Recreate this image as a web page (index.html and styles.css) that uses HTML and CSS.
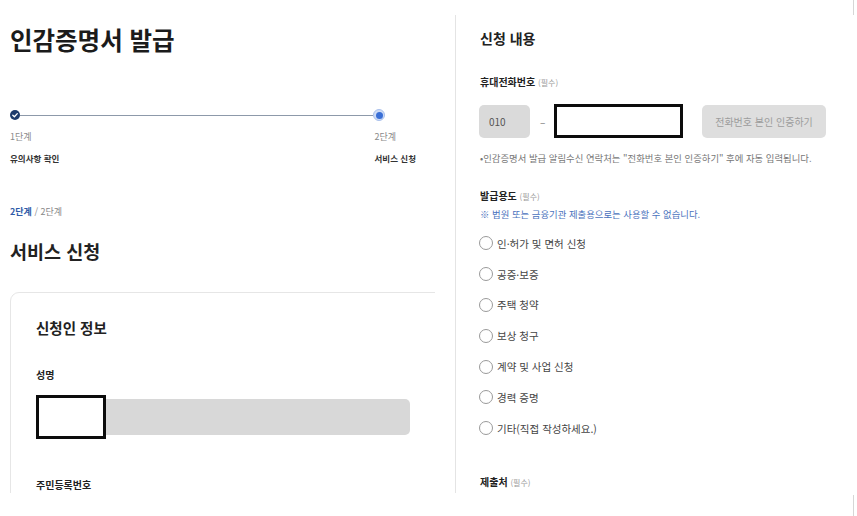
FILE: index.html
```html
<!DOCTYPE html>
<html lang="ko">
<head>
<meta charset="utf-8">
<title>인감증명서 발급</title>
<link rel="stylesheet" href="styles.css">
</head>
<body>
<div class="page">
  <section class="left">
    <h1 class="title">인감증명서 발급</h1>

    <div class="stepper">
      <div class="track">
        <span class="dot dot-done">
          <svg width="10" height="10" viewBox="0 0 10 10"><path d="M2.8 5.2 L4.4 6.7 L7.3 3.6" fill="none" stroke="#fff" stroke-width="1.3" stroke-linecap="round" stroke-linejoin="round"/></svg>
        </span>
        <span class="track-line"></span>
        <span class="dot dot-current"><span class="dot-inner"></span></span>
      </div>
      <div class="step-labels">
        <div class="step-label">
          <div class="step-num">1단계</div>
          <div class="step-name">유의사항 확인</div>
        </div>
        <div class="step-label">
          <div class="step-num">2단계</div>
          <div class="step-name">서비스 신청</div>
        </div>
      </div>
    </div>

    <div class="progress"><strong>2단계</strong> / 2단계</div>
    <h2 class="subtitle">서비스 신청</h2>

    <div class="card">
      <h3 class="card-title">신청인 정보</h3>
      <div class="field-label name-label">성명</div>
      <div class="name-field">
        <div class="gray-input"></div>
        <div class="redact redact-name"></div>
      </div>
      <div class="field-label rrn-label">주민등록번호</div>
    </div>
  </section>

  <section class="right">
    <h3 class="section-title">신청 내용</h3>

    <div class="field-label phone-label">휴대전화번호 <span class="req">(필수)</span></div>
    <div class="phone-row">
      <div class="prefix">010</div>
      <span class="dash">–</span>
      <div class="redact redact-phone"></div>
      <div class="verify-btn">전화번호 본인 인증하기</div>
    </div>
    <p class="note">•인감증명서 발급 알림수신 연락처는 "전화번호 본인 인증하기" 후에 자동 입력됩니다.</p>

    <div class="field-label purpose-label">발급용도 <span class="req">(필수)</span></div>
    <p class="warn">※ 법원 또는 금융기관 제출용으로는 사용할 수 없습니다.</p>

    <ul class="radios">
      <li class="radio"><span class="circle"></span>인·허가 및 면허 신청</li>
      <li class="radio"><span class="circle"></span>공증·보증</li>
      <li class="radio"><span class="circle"></span>주택 청약</li>
      <li class="radio"><span class="circle"></span>보상 청구</li>
      <li class="radio"><span class="circle"></span>계약 및 사업 신청</li>
      <li class="radio"><span class="circle"></span>경력 증명</li>
      <li class="radio"><span class="circle"></span>기타(직접 작성하세요.)</li>
    </ul>

    <div class="field-label submit-label">제출처 <span class="req">(필수)</span></div>
  </section>

  <div class="edge">
    <span class="edge-seg edge-top"></span>
    <span class="edge-seg edge-bottom"></span>
  </div>
</div>
</body>
</html>
```

FILE: styles.css
```css
* { box-sizing: border-box; }
html, body { margin: 0; padding: 0; background: #fff; }
body {
  width: 857px;
  height: 516px;
  overflow: hidden;
  font-family: "Noto Sans CJK KR", "Noto Sans", sans-serif;
  color: #222;
}
h1, h2, h3, p, ul { margin: 0; padding: 0; }

.page {
  display: flex;
  height: 516px;
}

/* ---------- left ---------- */
.left {
  width: 435px;
  height: 493px;
  padding-left: 10px;
  overflow: hidden;
  flex-shrink: 0;
}
.title {
  margin-top: 24px;
  font-size: 24.5px;
  line-height: 32px;
  font-weight: 700;
  color: #1b1b1b;
}

.stepper {
  width: 406px;
  margin-top: 53px;
}
.track {
  width: 375px;
  height: 12px;
  display: flex;
  align-items: center;
}
.dot {
  display: flex;
  align-items: center;
  justify-content: center;
  border-radius: 50%;
  flex-shrink: 0;
}
.dot-done {
  width: 10px;
  height: 10px;
  background: #1d3a6b;
}
.dot-current {
  width: 12px;
  height: 12px;
  background: #cfdcf5;
  border: 1px solid #a9c0ec;
}
.dot-inner {
  width: 7px;
  height: 7px;
  border-radius: 50%;
  background: #3a6fd6;
}
.track-line {
  flex: 1;
  height: 1px;
  background: #8d99aa;
}
.step-labels {
  display: flex;
  justify-content: space-between;
  margin-top: 10px;
}
.step-num {
  font-size: 9px;
  line-height: 12px;
  color: #8a8a8a;
}
.step-name {
  margin-top: 9px;
  font-size: 8.5px;
  line-height: 12px;
  font-weight: 700;
  color: #333;
}

.progress {
  margin-top: 42px;
  font-size: 9px;
  line-height: 12px;
  color: #888;
}
.progress strong {
  color: #2f5ba8;
  font-weight: 700;
}
.subtitle {
  margin-top: 21px;
  font-size: 18.5px;
  line-height: 24px;
  font-weight: 700;
  color: #222;
}

.card {
  margin-top: 29px;
  width: 470px;
  height: 240px;
  border: 1px solid #e6e6e6;
  border-radius: 9px;
  padding: 25px 0 0 25px;
}
.card-title {
  font-size: 14.5px;
  line-height: 20px;
  font-weight: 700;
  color: #222;
}
.field-label {
  font-size: 10px;
  line-height: 14px;
  font-weight: 700;
  color: #222;
}
.name-label { margin-top: 30px; }
.name-field {
  position: relative;
  margin-top: 13px;
  width: 374px;
  height: 44px;
  display: flex;
  align-items: center;
}
.gray-input {
  width: 374px;
  height: 36px;
  background: #d8d8d8;
  border-radius: 5px;
}
.redact {
  background: #fff;
  border: 3px solid #0c0c0c;
}
.redact-name {
  position: absolute;
  left: 0;
  top: 0;
  width: 70px;
  height: 44px;
}
.rrn-label { margin-top: 39px; }

/* ---------- right ---------- */
.right {
  margin-left: 20px;
  margin-top: 15px;
  height: 478px;
  width: 398px;
  flex-shrink: 0;
  border-left: 1px solid #e4e4e4;
  padding: 14px 0 0 24px;
}
.section-title {
  font-size: 14px;
  line-height: 18px;
  font-weight: 700;
  color: #222;
}
.req {
  font-size: 8px;
  font-weight: 400;
  color: #999;
}
.phone-label { margin-top: 28px; }
.phone-row {
  margin-top: 14px;
  height: 34px;
  display: flex;
  align-items: center;
  margin-left: -1px;
}
.prefix {
  width: 51px;
  height: 33px;
  background: #dadada;
  border-radius: 5px;
  font-size: 10px;
  line-height: 33px;
  padding-left: 10px;
  color: #555;
}
.dash {
  width: 8px;
  margin: 0 6px 0 10px;
  font-size: 10px;
  color: #777;
}
.redact-phone {
  width: 129px;
  height: 34px;
}
.verify-btn {
  margin-left: 19px;
  width: 124px;
  height: 33px;
  background: #dedede;
  border-radius: 5px;
  font-size: 10px;
  line-height: 33px;
  text-align: center;
  color: #9c9c9c;
}
.note {
  margin-top: 14px;
  font-size: 9.4px;
  line-height: 12px;
  color: #777;
  white-space: nowrap;
}
.purpose-label { margin-top: 25px; }
.warn {
  margin-top: 4px;
  font-size: 9.4px;
  line-height: 12px;
  color: #4a72bd;
  white-space: nowrap;
}
.radios {
  list-style: none;
  margin-top: 8px;
}
.radio {
  height: 30.8px;
  display: flex;
  align-items: center;
  font-size: 10.5px;
  color: #444;
}
.circle {
  width: 14px;
  height: 14px;
  border: 1.3px solid #9a9a9a;
  border-radius: 50%;
  margin: 0 4px 0 -1px;
  background: #fff;
  flex-shrink: 0;
}
.submit-label { margin-top: 31px; }

/* ---------- edge ---------- */
.edge {
  margin-left: auto;
  margin-right: 3px;
  width: 1px;
  display: flex;
  flex-direction: column;
  justify-content: space-between;
}
.edge-seg {
  display: block;
  width: 1px;
  background: #d6d6d6;
}
.edge-top { height: 15px; }
.edge-bottom { height: 21px; }
```
